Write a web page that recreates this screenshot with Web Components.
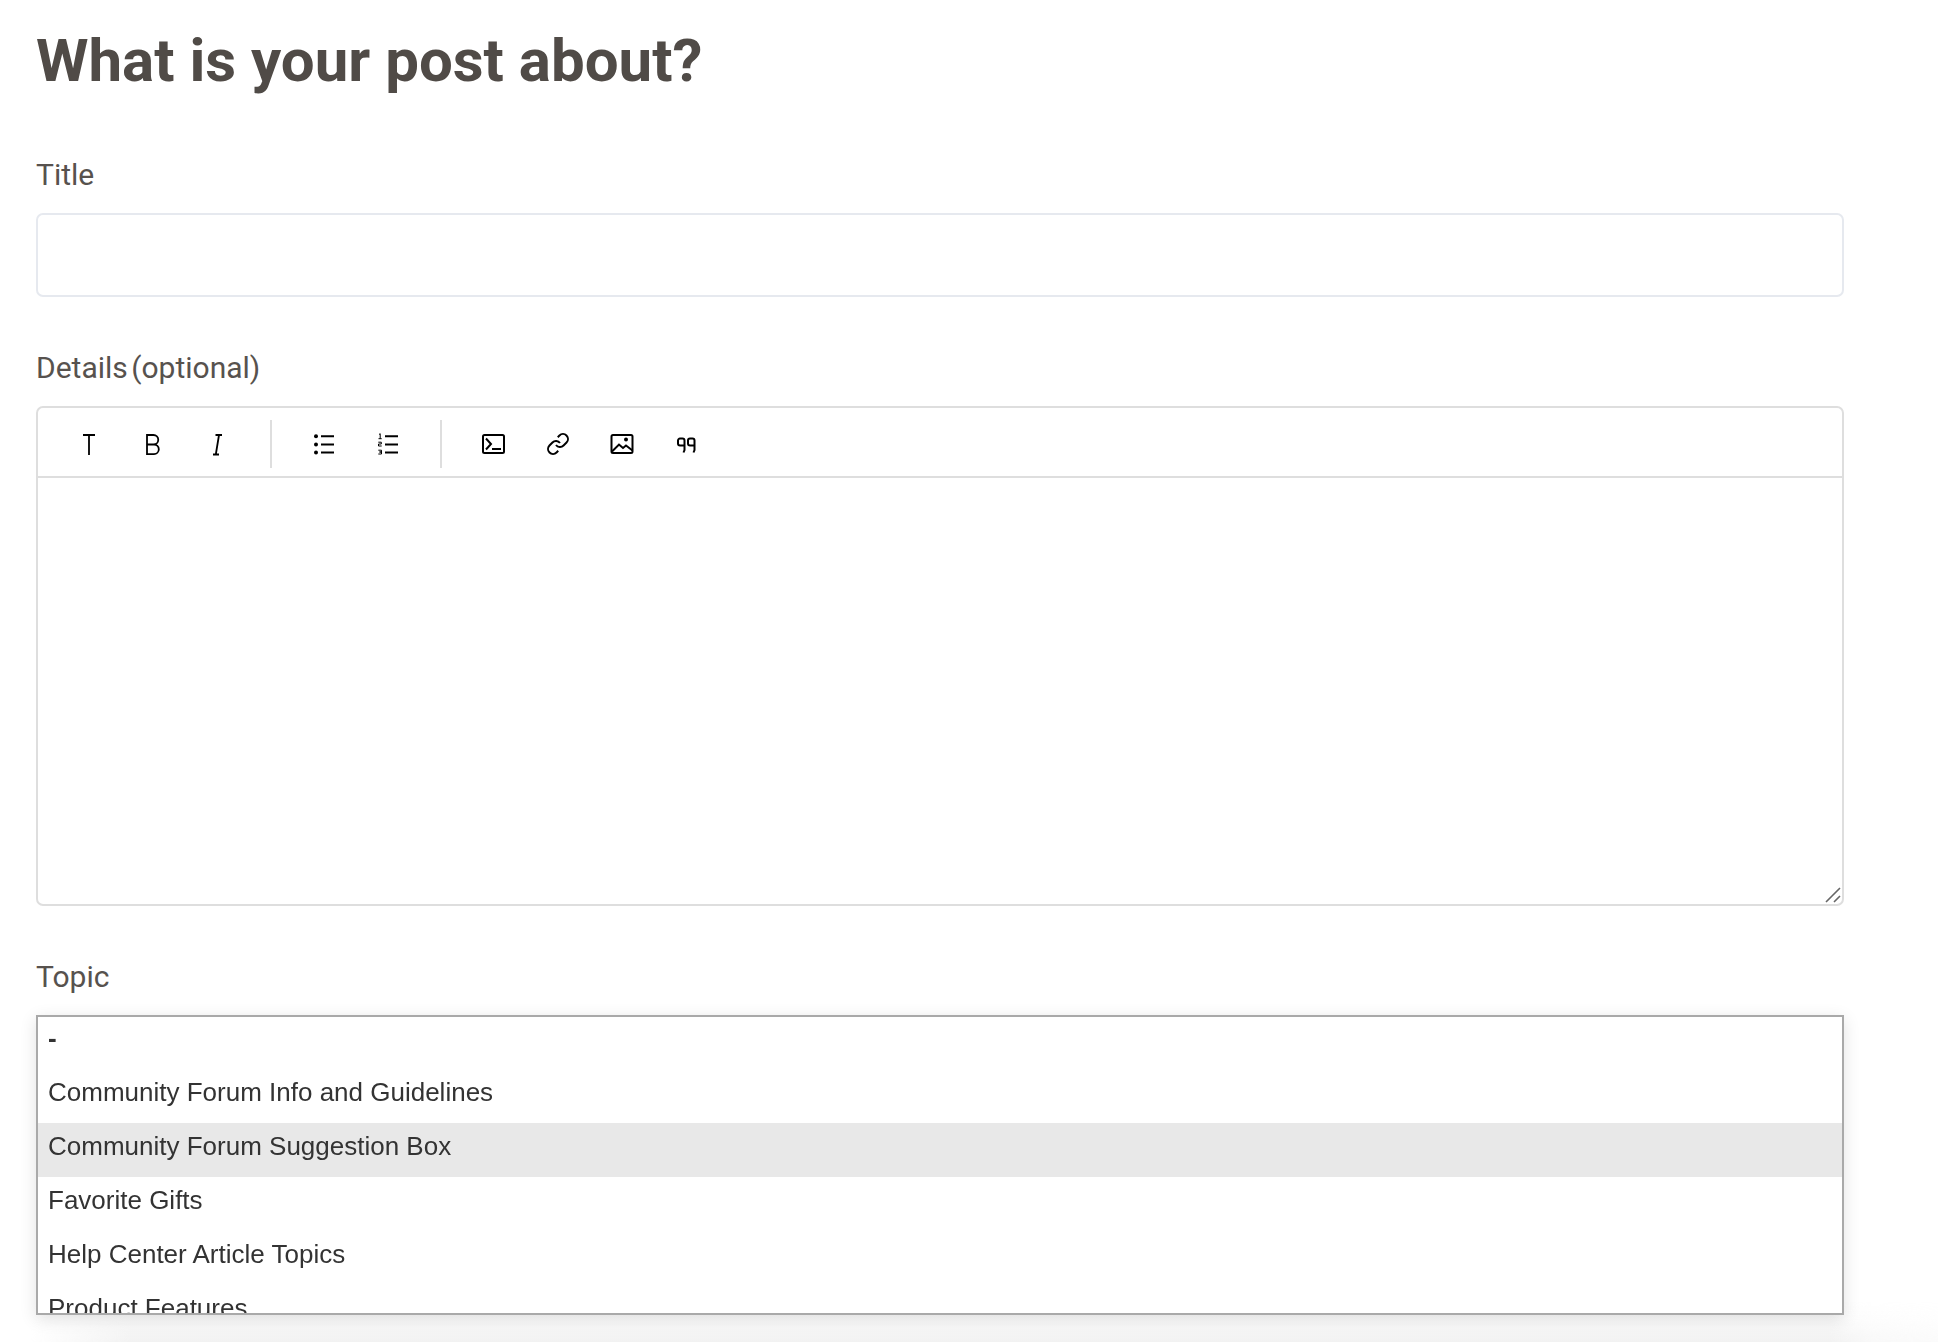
<!DOCTYPE html>
<html>
<head>
<meta charset="utf-8">
<title>What is your post about?</title>
<style>
  html, body { margin: 0; background: #fff; }
  body { height: 1342px; overflow: hidden; font-family: Roboto, sans-serif; }
</style>
</head>
<body>
<post-form>
  <form-field label="Title"><text-box></text-box></form-field>
  <form-field label="Details (optional)"><rich-editor></rich-editor></form-field>
  <form-field label="Topic">
    <topic-list>
      <topic-option strong>-</topic-option>
      <topic-option>Community Forum Info and Guidelines</topic-option>
      <topic-option selected>Community Forum Suggestion Box</topic-option>
      <topic-option>Favorite Gifts</topic-option>
      <topic-option>Help Center Article Topics</topic-option>
      <topic-option>Product Features</topic-option>
    </topic-list>
  </form-field>
</post-form>
<bottom-fade></bottom-fade>

<script>
/* toolbar icons, all on a 24 box */
const line = 'fill="none" stroke="#000" stroke-width="2"';
const toolIcons = {
  text: `<path d="M6 3h12M12 3v20" fill="none" stroke="#000" stroke-width="1.8"/>`,
  bold: `<path d="M6 3h6.5a4.7 4.7 0 0 1 0 9.5H6zM6 12.5h7a4.8 4.8 0 0 1 0 9.6H6z" fill="none" stroke="#000" stroke-width="1.8"/>`,
  italic: `<path d="M10.5 3h6.5M8 22.5h6M14 3l-3.2 19.5" fill="none" stroke="#000" stroke-width="1.8"/>`,
  ul: `<circle cx="4" cy="4.2" r="2"/><circle cx="4" cy="12.4" r="2"/><circle cx="4" cy="20.6" r="2"/><path d="M9 4.2h13M9 12.4h13M9 20.6h13" ${line}/>`,
  ol: `<path d="M9 4.2h13M9 12.4h13M9 20.6h13" ${line}/><path d="M3 2.5l1.2-.8v5M2.5 6.7h3.2M2.3 10.2h3v1.8h-2.8v2h3.2M2.3 18.2h3.2v1.8h-2 2v2h-3.2" fill="none" stroke="#000" stroke-width="1"/>`,
  code: `<rect x="1" y="3" width="21" height="18" rx="1.5" ${line}/><path d="M4 6.5l5 5.5-5 5.5M10 17h9" ${line}/>`,
  link: `<path d="M10 13a5 5 0 0 0 7.54.54l3-3a5 5 0 0 0-7.07-7.07l-1.72 1.71M14 11a5 5 0 0 0-7.54-.54l-3 3a5 5 0 0 0 7.07 7.07l1.71-1.71" ${line}/>`,
  image: `<rect x="1.5" y="3" width="21" height="18" rx="1.5" ${line}/><circle cx="16" cy="7.5" r="2"/><path d="M2 19.5l7-7 4 3.5 3-2.5 6.5 5" ${line}/>`,
  quote: `<path d="M10.5 13.5H6a2 2 0 0 1-2-2V8.5a2 2 0 0 1 2-2h2.5a2 2 0 0 1 2 2V18l-1 2.5M20.5 13.5H16a2 2 0 0 1-2-2V8.5a2 2 0 0 1 2-2h2.5a2 2 0 0 1 2 2V18l-1 2.5" ${line}/>`
};

class PostForm extends HTMLElement {
  constructor() {
    super();
    this.attachShadow({ mode: 'open' }).innerHTML = `
      <style>
        :host { display: block; width: 1808px; padding: 0 0 0 36px; color: #504b47; }
        h1 { margin: 0; padding-top: 22px; font: 700 60px/78px Roboto, sans-serif; color: #504b47; }
        .fields { display: flex; flex-direction: column; gap: 53px; margin-top: 57px; }
      </style>
      <h1>What is your post about?</h1>
      <div class="fields"><slot></slot></div>`;
  }
}
customElements.define('post-form', PostForm);

class FormField extends HTMLElement {
  constructor() {
    super();
    this.attachShadow({ mode: 'open' }).innerHTML = `
      <style>
        :host { display: block; }
        label { display: block; font: 400 30px/36px Roboto, sans-serif; word-spacing: -4px; color: #57524e; margin-bottom: 20px; }
      </style>
      <label>${this.getAttribute('label')}</label>
      <slot></slot>`;
  }
}
customElements.define('form-field', FormField);

class TextBox extends HTMLElement {
  constructor() {
    super();
    this.attachShadow({ mode: 'open' }).innerHTML = `
      <style>
        :host { display: block; height: 84px; box-sizing: border-box; border: 2px solid #e6e9ef; border-radius: 7px; }
      </style>`;
  }
}
customElements.define('text-box', TextBox);

class ToolIcon extends HTMLElement {
  constructor() {
    super();
    this.attachShadow({ mode: 'open' }).innerHTML = `
      <style>
        :host { display: flex; width: 64px; justify-content: center; align-items: center; }
        svg { width: 24px; height: 24px; display: block; }
      </style>
      <svg viewBox="0 0 24 24">${toolIcons[this.getAttribute('name')]}</svg>`;
  }
}
customElements.define('tool-icon', ToolIcon);

class RichEditor extends HTMLElement {
  constructor() {
    super();
    this.attachShadow({ mode: 'open' }).innerHTML = `
      <style>
        :host { display: block; position: relative; height: 500px; box-sizing: border-box; border: 2px solid #dedede; border-radius: 7px; }
        .bar { display: flex; align-items: center; height: 70px; box-sizing: border-box; border-bottom: 2px solid #dedede; padding: 4px 0 0 19px; }
        .group { display: flex; }
        .sep { width: 2px; height: 48px; background: #dedede; margin: 0 20px 0 21px; }
        .sep.last { margin-left: 20px; }
        .grip { position: absolute; right: 0; bottom: 0; width: 18px; height: 18px; }
      </style>
      <div class="bar">
        <div class="group"><tool-icon name="text"></tool-icon><tool-icon name="bold"></tool-icon><tool-icon name="italic"></tool-icon></div>
        <div class="sep"></div>
        <div class="group"><tool-icon name="ul"></tool-icon><tool-icon name="ol"></tool-icon></div>
        <div class="sep last"></div>
        <div class="group"><tool-icon name="code"></tool-icon><tool-icon name="link"></tool-icon><tool-icon name="image"></tool-icon><tool-icon name="quote"></tool-icon></div>
      </div>
      <svg class="grip" viewBox="0 0 18 18"><path d="M2 16L16 2M10 16l6-6" stroke="#666" stroke-width="1.6" fill="none"/></svg>`;
  }
}
customElements.define('rich-editor', RichEditor);

class TopicList extends HTMLElement {
  constructor() {
    super();
    this.attachShadow({ mode: 'open' }).innerHTML = `
      <style>
        :host { display: block; position: relative; z-index: 1; height: 300px; box-sizing: border-box; border: 2px solid #a9a9a9; background: #fff; box-shadow: 0 4px 16px rgba(0,0,0,.12); }
        .scroll { height: 100%; overflow: hidden; }
        .rows { margin-top: -2px; }
      </style>
      <div class="scroll"><div class="rows"><slot></slot></div></div>`;
  }
}
customElements.define('topic-list', TopicList);

class TopicOption extends HTMLElement {
  constructor() {
    super();
    this.attachShadow({ mode: 'open' }).innerHTML = `
      <style>
        :host { display: block; height: 54px; padding: 0 10px; font: 400 26px/47px "Liberation Sans", Arial, sans-serif; color: #333; white-space: nowrap; }
        :host([selected]) { background: #e8e8e8; }
        :host([strong]) { font-weight: 700; }
      </style>
      <slot></slot>`;
  }
}
customElements.define('topic-option', TopicOption);

/* soft grey glow along the bottom edge of the window */
class BottomFade extends HTMLElement {
  constructor() {
    super();
    this.attachShadow({ mode: 'open' }).innerHTML = `
      <style>
        :host {
          display: block; position: fixed; left: 0; right: 0; bottom: 0; height: 42px; pointer-events: none;
          background: linear-gradient(rgba(242,242,242,0), rgba(242,242,242,.35) 50%, #f2f2f2);
          -webkit-mask-image: linear-gradient(to right, transparent 30px, #000 130px, #000 1830px, rgba(0,0,0,.5) 1870px, rgba(0,0,0,.3));
        }
      </style>`;
  }
}
customElements.define('bottom-fade', BottomFade);
</script>
</body>
</html>
